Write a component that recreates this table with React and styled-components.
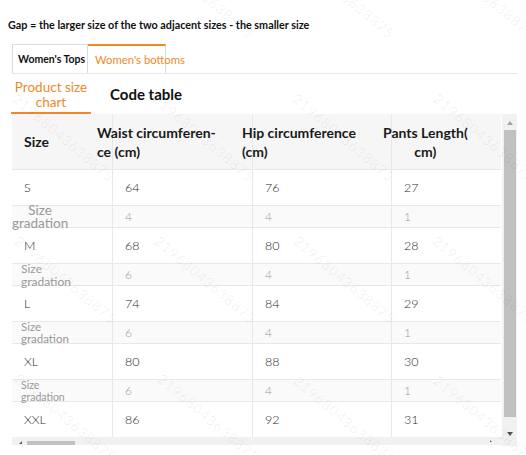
import React from 'react'
import styled, { createGlobalStyle } from 'styled-components'

const ORANGE = '#ee8a2a'
const LINE = '#e8e8e8'

const GlobalStyle = createGlobalStyle`
    body {
        margin: 0;
        background: #fff;
        font-family: Lato, "Noto Sans", sans-serif;
    }
`

const sizes = [
    { size: 'S', values: [64, 76, 27] },
    { gap: [4, 4, 1], label: 13.5, lh: 13, centered: true },
    { size: 'M', values: [68, 80, 28] },
    { gap: [6, 4, 1], label: 12, lh: 13 },
    { size: 'L', values: [74, 84, 29] },
    { gap: [6, 4, 1], label: 11.5, lh: 12 },
    { size: 'XL', values: [80, 88, 30] },
    { gap: [6, 4, 1], label: 10.5, lh: 12 },
    { size: 'XXL', values: [86, 92, 31] },
]

const marks = [
    [155, -55], [295, -55], [436, -55],
    [15, 88], [155, 88], [295, 88], [436, 88],
    [17, 230], [157, 230], [296, 230], [435, 230],
    [17, 368], [160, 368], [296, 370], [436, 370],
]

function App() {
    return (
        <>
        <GlobalStyle />
        <Page>
            <Title>Gap = the larger size of the two adjacent sizes - the smaller size</Title>
            <TabBar>
                <Tab>Women's Tops</Tab>
                <Tab active>Women's bottoms</Tab>
            </TabBar>
            <SubTabs>
                <SubTab active>Product size<br />chart</SubTab>
                <SubTab>Code table</SubTab>
            </SubTabs>
            <TableFrame>
                <TableCol>
                    <Grid>
                        <HeadCell><HeadText>Size</HeadText></HeadCell>
                        <HeadCell><HeadText shift={-28}>Waist circumferen-<br />ce (cm)</HeadText></HeadCell>
                        <HeadCell><HeadText shift={-23}>Hip circumference<br />(cm)</HeadText></HeadCell>
                        <HeadCell last><HeadText shift={-21} center>Pants Length(<br />cm)</HeadText></HeadCell>
                        {sizes.map((row, i) => row.gap ? (
                            <React.Fragment key={i}>
                                <Cell gap>
                                    <GapLabel size={row.label} lh={row.lh} centered={row.centered}>Size<br />gradation</GapLabel>
                                </Cell>
                                {row.gap.map((v, j) => (
                                    <Cell gap last={j === 2} key={j}><GapValue>{v}</GapValue></Cell>
                                ))}
                            </React.Fragment>
                        ) : (
                            <React.Fragment key={i}>
                                <Cell><Value>{row.size}</Value></Cell>
                                {row.values.map((v, j) => (
                                    <Cell last={j === 2} key={j}><Value>{v}</Value></Cell>
                                ))}
                            </React.Fragment>
                        ))}
                    </Grid>
                    <HScroll>
                        <ArrowLeft />
                        <HThumb />
                        <ArrowRight />
                    </HScroll>
                </TableCol>
                <VScroll>
                    <ArrowUp />
                    <VThumb />
                    <ArrowDown />
                </VScroll>
            </TableFrame>
            <Watermarks>
                {marks.map(([x, y], i) => (
                    <Mark key={i} style={{ left: x, top: y }}>21968043638875</Mark>
                ))}
            </Watermarks>
        </Page>
        </>
    )
}

export default App

const Page = styled.div`
    position: relative;
    width: 526px;
    height: 455px;
    overflow: hidden;
    box-sizing: border-box;
    padding: 18px 8px 0;
`

const Title = styled.div`
    font-size: 10.8px;
    font-weight: 700;
    line-height: 14px;
    color: #111;
    white-space: nowrap;
`

const TabBar = styled.div`
    display: flex;
    margin: 12px 0 0 4px;
    border-bottom: 1px solid ${LINE};
`

const Tab = styled.div`
    box-sizing: border-box;
    height: 29px;
    display: flex;
    align-items: center;
    white-space: nowrap;
    width: ${p => p.active ? 78 : 76}px;
    padding-left: ${p => p.active ? 7 : 5}px;
    font-size: ${p => p.active ? 11.3 : 10.5}px;
    font-weight: ${p => p.active ? 400 : 700};
    color: ${p => p.active ? ORANGE : '#111'};
    border-top: ${p => p.active ? `2px solid ${ORANGE}` : `1px solid #dcdcdc`};
    border-left: ${p => p.active ? 'none' : '1px solid #dcdcdc'};
    border-right: 1px solid #dcdcdc;
`

const SubTabs = styled.div`
    display: flex;
    height: 40px;
    margin-left: 3px;
`

const SubTab = styled.div`
    box-sizing: border-box;
    height: 40px;
    ${p => p.active ? `
        width: 80px;
        padding-top: 6px;
        text-align: center;
        font-size: 13.5px;
        line-height: 15px;
        color: ${ORANGE};
        border-bottom: 2px solid ${ORANGE};
    ` : `
        margin-left: 19px;
        font-size: 15px;
        font-weight: 700;
        line-height: 40px;
        color: #111;
    `}
`

const TableFrame = styled.div`
    display: flex;
    margin-left: 4px;
`

const TableCol = styled.div`
    display: flex;
    flex-direction: column;
    width: 490px;
`

const Grid = styled.div`
    display: grid;
    grid-template-columns: 101px 140px 139px 109px;
    align-content: start;
    height: 323px;
    overflow: hidden;
`

const HeadCell = styled.div`
    box-sizing: border-box;
    height: 56px;
    display: flex;
    align-items: center;
    padding-left: 12px;
    background: #f6f6f6;
    border-bottom: 1px solid ${LINE};
    border-right: ${p => p.last ? 'none' : `1px solid ${LINE}`};
`

const HeadText = styled.div`
    margin-left: ${p => p.shift || 0}px;
    font-size: 14px;
    font-weight: 700;
    line-height: 19px;
    color: #1a1a1a;
    white-space: nowrap;
    text-align: ${p => p.center ? 'center' : 'left'};
`

const Cell = styled.div`
    box-sizing: border-box;
    height: ${p => p.gap ? 22 : 36}px;
    display: flex;
    align-items: center;
    padding-left: 12px;
    background: ${p => p.gap ? '#fafafa' : '#fff'};
    border-bottom: 1px solid ${LINE};
    border-right: ${p => p.last ? 'none' : `1px solid ${LINE}`};
`

const Value = styled.span`
    font-size: 12.5px;
    font-weight: 300;
    color: #2a2a2a;
`

const GapValue = styled.span`
    font-size: 12px;
    font-weight: 300;
    color: #999;
`

const GapLabel = styled.div`
    position: relative;
    z-index: 1;
    margin-left: ${p => p.centered ? -12 : -3}px;
    width: ${p => p.centered ? '56px' : 'auto'};
    text-align: ${p => p.centered ? 'center' : 'left'};
    font-size: ${p => p.size}px;
    line-height: ${p => p.lh}px;
    color: #999;
    white-space: nowrap;
`

const HScroll = styled.div`
    display: flex;
    align-items: flex-end;
    height: 8px;
    background: #f1f1f1;
`

const ArrowLeft = styled.div`
    width: 0;
    height: 0;
    margin: 0 5px 1px 7px;
    border-top: 3px solid transparent;
    border-right: 3px solid #606060;
`

const HThumb = styled.div`
    width: 48px;
    height: 4px;
    background: #c1c1c1;
`

const ArrowRight = styled.div`
    width: 0;
    height: 0;
    margin: 0 10px 3px auto;
    border-top: 2px solid transparent;
    border-left: 2px solid #606060;
`

const VScroll = styled.div`
    display: flex;
    flex-direction: column;
    align-items: center;
    width: 15px;
    height: 332px;
    background: #f1f1f1;
`

const ArrowUp = styled.div`
    width: 0;
    height: 0;
    margin: 7px 0 5px;
    border-left: 3.5px solid transparent;
    border-right: 3.5px solid transparent;
    border-bottom: 4px solid #a3a3a3;
`

const VThumb = styled.div`
    width: 12px;
    height: 287px;
    background: #c1c1c1;
`

const ArrowDown = styled.div`
    width: 0;
    height: 0;
    margin-top: 15px;
    border-left: 3.5px solid transparent;
    border-right: 3.5px solid transparent;
    border-top: 4px solid #505050;
`

const Watermarks = styled.div`
    position: absolute;
    inset: 0;
    pointer-events: none;
    z-index: 2;
`

const Mark = styled.span`
    position: absolute;
    transform: rotate(40deg);
    transform-origin: left center;
    font-size: 14px;
    letter-spacing: 1px;
    color: rgba(0, 0, 0, 0.06);
    white-space: nowrap;
`
